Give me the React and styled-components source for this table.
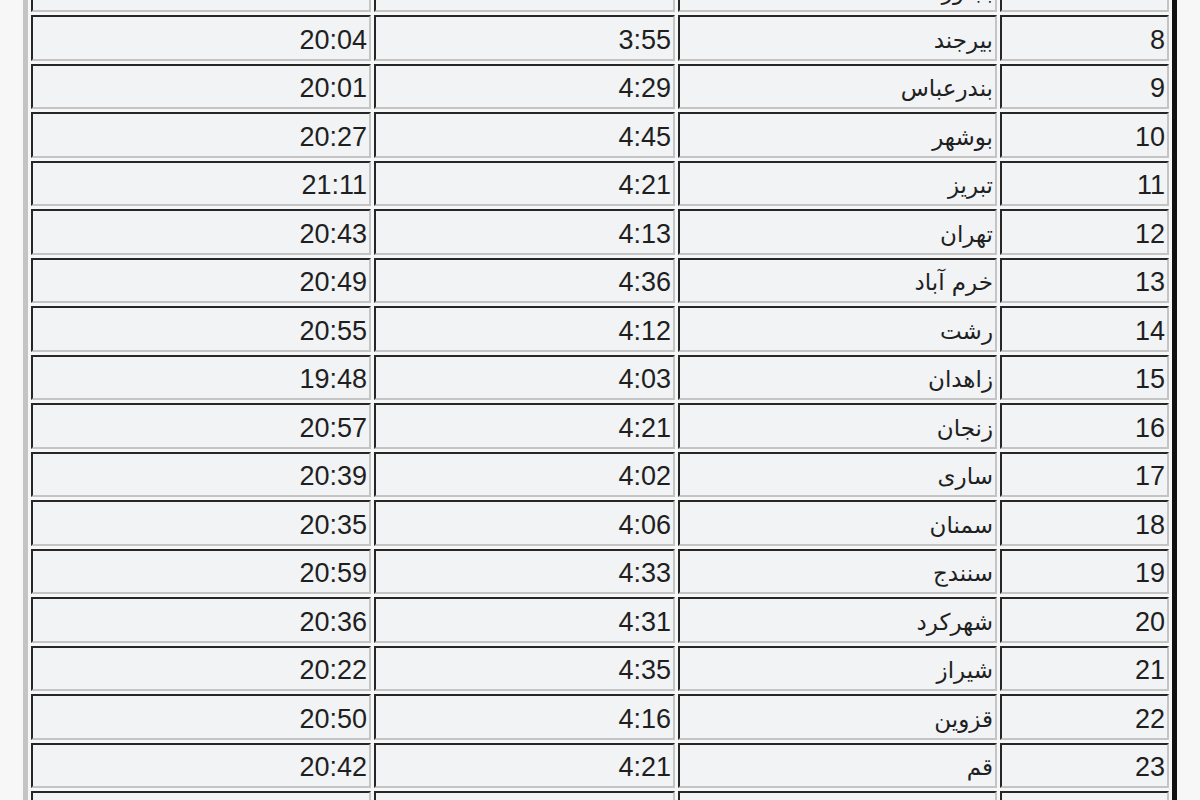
import React from "react"
import styled, { createGlobalStyle } from 'styled-components'

const GlobalStyle = createGlobalStyle`
    html, body {
        margin: 0;
        padding: 0;
        background: #f7f7f7;
        overflow: hidden;
    }
`

const Page = styled.div`
    height: 800px;
    overflow: hidden;
    padding-left: 23px;
    background: #f7f7f7;
`

const Table = styled.table`
    margin-top: -41.5px;
    width: 1154px;
    border-collapse: separate;
    border-spacing: 3px;
    border-style: solid;
    border-width: 5px;
    border-color: #c4c4c4 #111 #111 #c4c4c4;
    background: #f7f7f7;
    table-layout: fixed;
`

const Cell = styled.td`
    box-sizing: border-box;
    width: ${p => p.w}px;
    height: 45.5px;
    padding: 0 2px 0 2px;
    border-style: solid;
    border-width: 2px;
    border-color: #262626 #c4c4c4 #c4c4c4 #262626;
    background: #f1f3f5;
    text-align: right;
    vertical-align: middle;
    color: #1f1f1f;
    font-family: ${p => p.fa ? '"DejaVu Sans", sans-serif' : '"Liberation Sans", Arial, sans-serif'};
    font-size: ${p => p.fa ? '23px' : '27px'};
    line-height: 1;
    padding-top: ${p => p.fa ? '5px' : '5px'};
    white-space: nowrap;
`

const rows = [
    [7, 'بجنورد', '3:59', '20:22'],
    [8, 'بیرجند', '3:55', '20:04'],
    [9, 'بندرعباس', '4:29', '20:01'],
    [10, 'بوشهر', '4:45', '20:27'],
    [11, 'تبریز', '4:21', '21:11'],
    [12, 'تهران', '4:13', '20:43'],
    [13, 'خرم آباد', '4:36', '20:49'],
    [14, 'رشت', '4:12', '20:55'],
    [15, 'زاهدان', '4:03', '19:48'],
    [16, 'زنجان', '4:21', '20:57'],
    [17, 'ساری', '4:02', '20:39'],
    [18, 'سمنان', '4:06', '20:35'],
    [19, 'سنندج', '4:33', '20:59'],
    [20, 'شهرکرد', '4:31', '20:36'],
    [21, 'شیراز', '4:35', '20:22'],
    [22, 'قزوین', '4:16', '20:50'],
    [23, 'قم', '4:21', '20:42'],
    [24, 'کرج', '4:16', '20:47'],
]

function App(){
    return (
        <Page>
            <GlobalStyle />
            <Table>
                <tbody>
                    {rows.map(([n, city, sahar, iftar]) => (
                        <tr key={n}>
                            <Cell w={340}>{iftar}</Cell>
                            <Cell w={301}>{sahar}</Cell>
                            <Cell w={319} fa dir="rtl">{city}</Cell>
                            <Cell w={169}>{n}</Cell>
                        </tr>
                    ))}
                </tbody>
            </Table>
        </Page>
    )
}

export default App;
